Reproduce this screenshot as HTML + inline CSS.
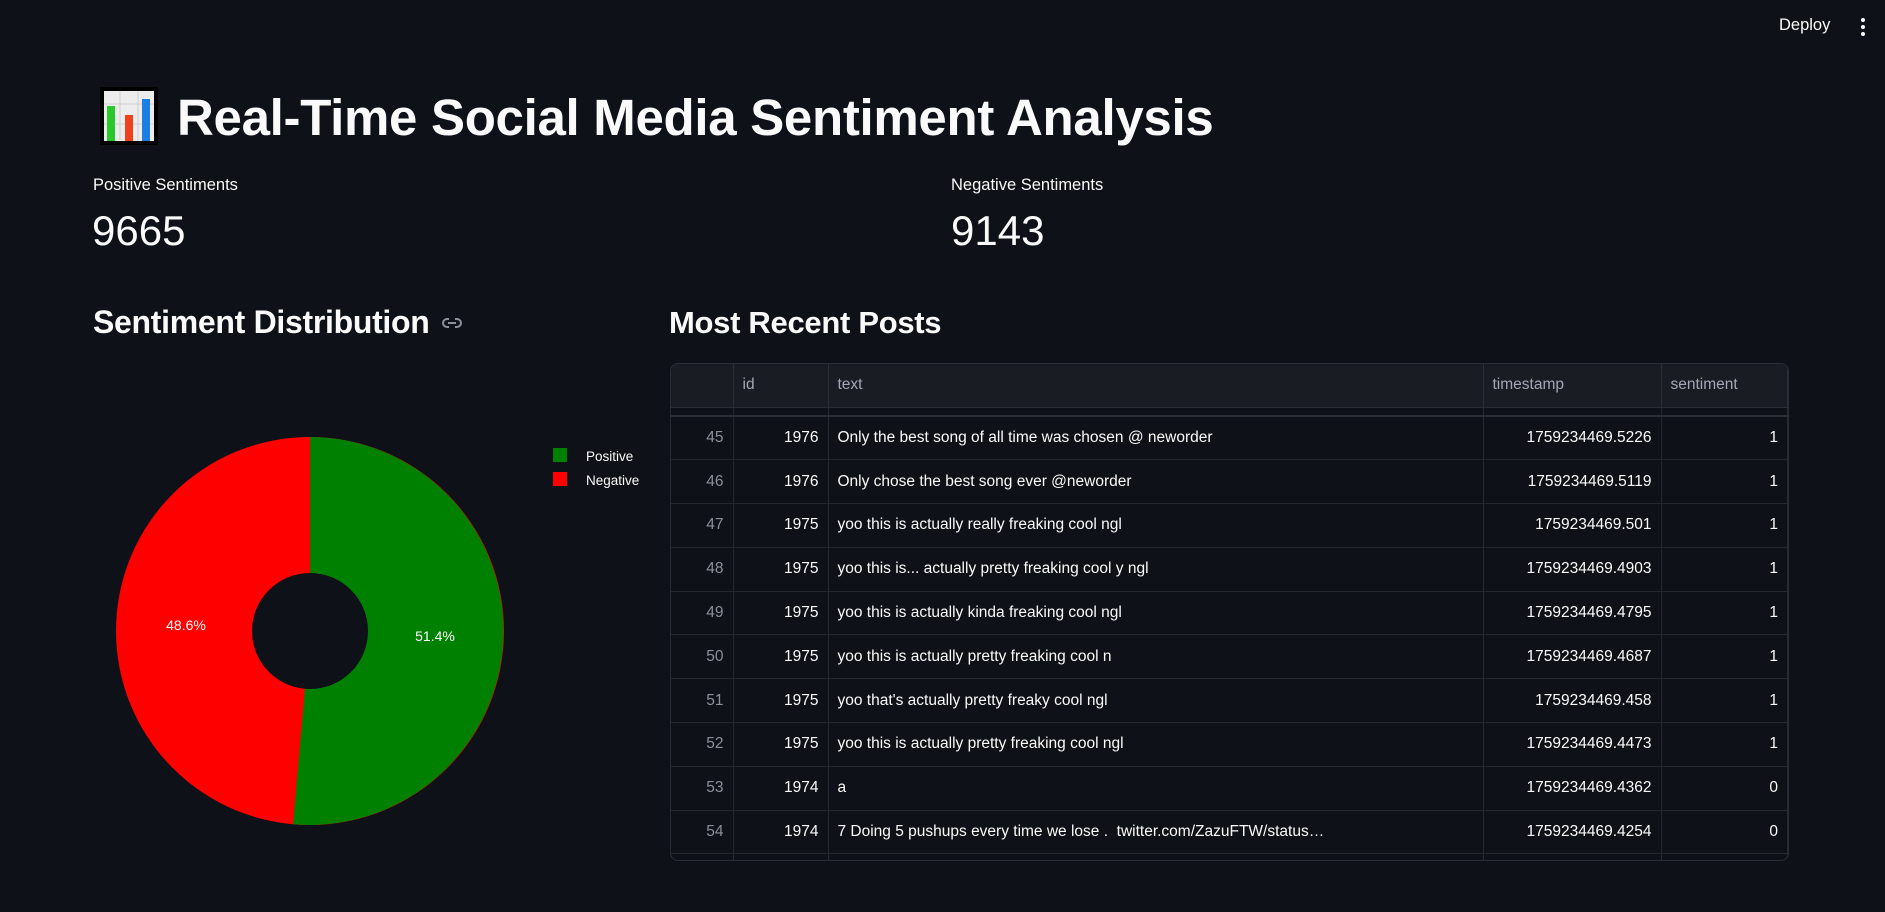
<!DOCTYPE html>
<html><head><meta charset="utf-8"><style>
*{margin:0;padding:0;box-sizing:border-box}
body{width:1885px;height:912px;background:#0e1117;color:#fafafa;font-family:"Liberation Sans",sans-serif;position:relative;overflow:hidden}
.abs{position:absolute;white-space:nowrap}
h1{position:absolute;left:177px;top:92px;font-size:51px;line-height:1;font-weight:bold;letter-spacing:-0.3px;white-space:nowrap}
.lbl{font-size:16.5px;line-height:1}
.num{font-size:42px;line-height:1}
h3{position:absolute;font-size:32px;font-weight:bold;letter-spacing:-0.3px}
.wrap{position:absolute;left:670px;top:363px;width:1119px;height:498px;border:1px solid #2a2d36;border-radius:8px;overflow:hidden}
table{width:100%;border-collapse:collapse;font-size:15.5px;table-layout:fixed}
th{height:43px;background:#1a1c24;color:#a3a8b4;font-weight:normal;text-align:left;padding-left:9px;border-right:1px solid #2a2d36;border-bottom:1px solid #2a2d36}
td{height:43.8px;border-right:1px solid #262830;border-bottom:1px solid #262830;padding:0 9px;white-space:nowrap;overflow:hidden}
td.i{color:#8b909a;text-align:right}
td.r{text-align:right}
tr.sp td{height:9px;border-bottom:2px solid #2a2d36}
</style></head><body>
<div class="abs" style="left:1779px;top:16px;font-size:16.5px">Deploy</div>
<svg class="abs" style="left:1857px;top:16px" width="12" height="22"><circle cx="6" cy="4" r="2" fill="#fafafa"/><circle cx="6" cy="11" r="2" fill="#fafafa"/><circle cx="6" cy="18" r="2" fill="#fafafa"/></svg>
<svg class="abs" style="left:100px;top:87px" width="58" height="58"><rect x="0" y="0" width="58" height="58" fill="#000"/><rect x="4" y="4" width="50" height="50" fill="#ececec"/><g stroke="#cfcfcf" stroke-width="1"><line x1="4" y1="17" x2="54" y2="17"/><line x1="4" y1="37" x2="54" y2="37"/><line x1="20" y1="4" x2="20" y2="54"/><line x1="38" y1="4" x2="38" y2="54"/></g><rect x="7" y="19" width="8" height="35" fill="#2bc82b"/><rect x="25" y="28" width="8" height="26" fill="#f0401c"/><rect x="42" y="12" width="8" height="42" fill="#1a7fe0"/></svg>
<h1>Real-Time Social Media Sentiment Analysis</h1>
<div class="abs lbl" style="left:93px;top:177px">Positive Sentiments</div>
<div class="abs num" style="left:92px;top:210px">9665</div>
<div class="abs lbl" style="left:951px;top:177px">Negative Sentiments</div>
<div class="abs num" style="left:951px;top:210px">9143</div>
<h3 style="left:93px;top:304px">Sentiment Distribution</h3>
<svg class="abs" style="left:442px;top:316px" width="20" height="14" fill="none" stroke="#8b909a" stroke-width="2"><path d="M7 3H5a4 4 0 0 0 0 8h2M13 3h2a4 4 0 0 1 0 8h-2M6 7h8"/></svg>
<h3 style="left:669px;top:305px;font-size:31px">Most Recent Posts</h3>
<svg class="abs" style="left:0;top:0" width="660" height="912">
<circle cx="310" cy="631" r="194" fill="#ff0000"/>
<path d="M310 631 L310 437 A194 194 0 1 1 293 824.3 Z" fill="#008000"/>
<circle cx="310" cy="631" r="58" fill="#0e1117"/>
<text x="435" y="641" fill="#fff" font-size="14" text-anchor="middle" font-family="Liberation Sans">51.4%</text>
<text x="186" y="630" fill="#fff" font-size="14" text-anchor="middle" font-family="Liberation Sans">48.6%</text>
<rect x="553" y="448" width="14" height="14" fill="#008000"/>
<rect x="553" y="472" width="14" height="14" fill="#ff0000"/>
<text x="586" y="461" fill="#fafafa" font-size="13.5" font-family="Liberation Sans">Positive</text>
<text x="586" y="485" fill="#fafafa" font-size="13.5" font-family="Liberation Sans">Negative</text>
</svg>
<div class="wrap"><table>
<colgroup><col style="width:62px"><col style="width:95px"><col style="width:655px"><col style="width:178px"><col></colgroup>
<tr><th></th><th>id</th><th>text</th><th>timestamp</th><th>sentiment</th></tr>
<tr class="sp"><td></td><td></td><td></td><td></td><td></td></tr>
<tr><td class="i">45</td><td class="r">1976</td><td>Only the best song of all time was chosen @ neworder</td><td class="r">1759234469.5226</td><td class="r">1</td></tr>
<tr><td class="i">46</td><td class="r">1976</td><td>Only chose the best song ever @neworder</td><td class="r">1759234469.5119</td><td class="r">1</td></tr>
<tr><td class="i">47</td><td class="r">1975</td><td>yoo this is actually really freaking cool ngl</td><td class="r">1759234469.501</td><td class="r">1</td></tr>
<tr><td class="i">48</td><td class="r">1975</td><td>yoo this is... actually pretty freaking cool y ngl</td><td class="r">1759234469.4903</td><td class="r">1</td></tr>
<tr><td class="i">49</td><td class="r">1975</td><td>yoo this is actually kinda freaking cool ngl</td><td class="r">1759234469.4795</td><td class="r">1</td></tr>
<tr><td class="i">50</td><td class="r">1975</td><td>yoo this is actually pretty freaking cool n</td><td class="r">1759234469.4687</td><td class="r">1</td></tr>
<tr><td class="i">51</td><td class="r">1975</td><td>yoo that's actually pretty freaky cool ngl</td><td class="r">1759234469.458</td><td class="r">1</td></tr>
<tr><td class="i">52</td><td class="r">1975</td><td>yoo this is actually pretty freaking cool ngl</td><td class="r">1759234469.4473</td><td class="r">1</td></tr>
<tr><td class="i">53</td><td class="r">1974</td><td>a</td><td class="r">1759234469.4362</td><td class="r">0</td></tr>
<tr><td class="i">54</td><td class="r">1974</td><td>7 Doing 5 pushups every time we lose .&nbsp; twitter.com/ZazuFTW/status…</td><td class="r">1759234469.4254</td><td class="r">0</td></tr>
<tr><td class="i"></td><td></td><td></td><td></td><td></td></tr>
</table></div>
</body></html>
